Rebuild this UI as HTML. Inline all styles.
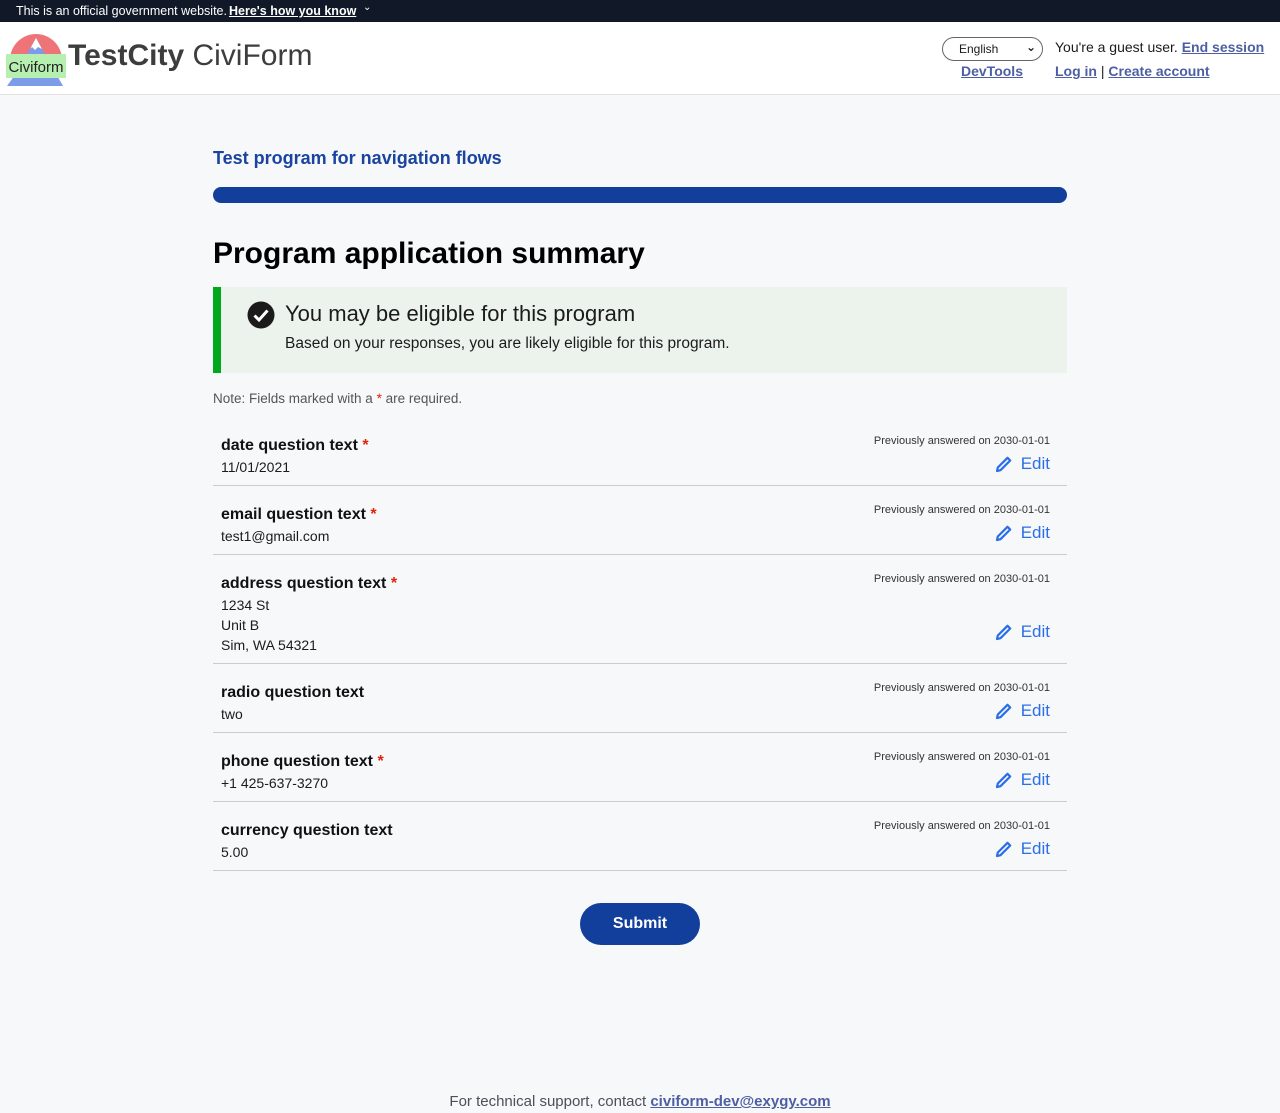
<!DOCTYPE html>
<html><head><meta charset="utf-8"><style>
*{box-sizing:border-box;margin:0;padding:0}
body{width:1280px;height:1113px;background:#f7f8fa;font-family:"Liberation Sans","DejaVu Sans",sans-serif;color:#1b1b1b;position:relative;overflow:hidden}
.a{position:absolute;white-space:nowrap}
.top{left:0;top:0;width:1280px;height:22px;background:#111827;color:#fff;font-size:12.5px}
.hdr{left:0;top:22px;width:1280px;height:73px;background:#fff;border-bottom:1px solid #e3e3e3}
a{color:#4d5fa3;font-weight:bold;text-decoration:underline}
.row{position:absolute;left:213px;width:854px;border-bottom:1px solid #ccc}
.lbl{position:absolute;left:8px;font-weight:bold;font-size:16px;color:#111}
.lbl b{color:#e52207}
.val{position:absolute;left:8px;font-size:14px;line-height:20px}
.prev{position:absolute;right:17px;font-size:11px;color:#333}
.edit{position:absolute;right:17px;font-size:17px;color:#2a6ee8;display:flex;align-items:center;gap:8px}
</style></head><body>
<div class="a top"><span class="a" style="left:16px;top:4px">This is an official government website.</span><span class="a" style="left:229px;top:4px;font-weight:bold;text-decoration:underline">Here's how you know</span><span class="a" style="left:363px;top:2px;font-size:10px">&#8964;</span></div>
<div class="a hdr">
<svg class="a" style="left:5px;top:8px" width="62" height="56" viewBox="0 0 62 56">
<path d="M5 30 A26 26 0 0 1 57 30 L57 40 L5 40Z" fill="#ef7477"/>
<path d="M31 8 L50 42 L58 56 L2 56 L12 42Z" fill="#7c9be8"/>
<path d="M31 8 L37 19 L33 17 L30 20 L27 17 L25 19Z" fill="#fff"/>
<rect x="1" y="24" width="60" height="24" fill="#b6f0b0"/>
<text x="31" y="42" text-anchor="middle" font-size="15" font-family="Liberation Sans" fill="#222">Civiform</text>
</svg>
<span class="a" style="left:68px;top:17px;font-size:30px;color:#3d3d3d"><b>TestCity</b> CiviForm</span>
<div class="a" style="left:942px;top:15px;width:101px;height:24px;border:1px solid #666;border-radius:12px;background:#fff;font-size:12px;padding:4px 0 0 16px">English<span style="position:absolute;right:6px;top:2px;font-weight:bold">&#8964;</span></div>
<span class="a" style="left:961px;top:41px;font-size:14px"><a>DevTools</a></span>
<span class="a" style="left:1055px;top:17px;font-size:14px">You're a guest user. <a>End session</a></span>
<span class="a" style="left:1055px;top:41px;font-size:14px"><a>Log in</a> | <a>Create account</a></span>
</div>
<div class="a" style="left:213px;top:148px;font-size:18px;font-weight:bold;color:#1a44a0">Test program for navigation flows</div>
<div class="a" style="left:213px;top:187px;width:854px;height:16px;background:#133f9c;border-radius:8px"></div>
<div class="a" style="left:213px;top:237px;font-size:30px;font-weight:bold;color:#000">Program application summary</div>
<div class="a" style="left:213px;top:287px;width:854px;height:86px;background:#ecf3ec;border-left:8px solid #00a91c"></div>
<svg class="a" style="left:247px;top:301px" width="28" height="28" viewBox="0 0 28 28"><circle cx="14" cy="14" r="13.5" fill="#1b1b1b"/><path d="M7.5 14.5 L12 19 L20.5 9.5" stroke="#fff" stroke-width="3" fill="none"/></svg>
<div class="a" style="left:285px;top:301px;font-size:22px">You may be eligible for this program</div>
<div class="a" style="left:285px;top:335px;font-size:15.5px">Based on your responses, you are likely eligible for this program.</div>
<div class="a" style="left:213px;top:391px;font-size:13.5px;color:#555">Note: Fields marked with a <span style="color:#e52207">*</span> are required.</div>

<div class="row" style="top:416px;height:70px"><div class="lbl" style="top:21px">date question text <b>*</b></div><div class="val" style="top:41px">11/01/2021</div><div class="prev" style="top:19px">Previously answered on 2030-01-01</div><div class="edit" style="top:38px"><svg width="18" height="18" viewBox="0 0 18 18"><path d="M2 16 L2.8 12.5 L12.5 2.8 L15.2 5.5 L5.5 15.2Z" fill="none" stroke="#2a6ee8" stroke-width="2.2" stroke-linejoin="round"/></svg>Edit</div></div>
<div class="row" style="top:486px;height:69px"><div class="lbl" style="top:20px">email question text <b>*</b></div><div class="val" style="top:40px">test1@gmail.com</div><div class="prev" style="top:18px">Previously answered on 2030-01-01</div><div class="edit" style="top:37px"><svg width="18" height="18" viewBox="0 0 18 18"><path d="M2 16 L2.8 12.5 L12.5 2.8 L15.2 5.5 L5.5 15.2Z" fill="none" stroke="#2a6ee8" stroke-width="2.2" stroke-linejoin="round"/></svg>Edit</div></div>
<div class="row" style="top:555px;height:109px"><div class="lbl" style="top:20px">address question text <b>*</b></div><div class="val" style="top:40px">1234 St<br>Unit B<br>Sim, WA 54321</div><div class="prev" style="top:18px">Previously answered on 2030-01-01</div><div class="edit" style="top:67px"><svg width="18" height="18" viewBox="0 0 18 18"><path d="M2 16 L2.8 12.5 L12.5 2.8 L15.2 5.5 L5.5 15.2Z" fill="none" stroke="#2a6ee8" stroke-width="2.2" stroke-linejoin="round"/></svg>Edit</div></div>
<div class="row" style="top:664px;height:69px"><div class="lbl" style="top:20px">radio question text</div><div class="val" style="top:40px">two</div><div class="prev" style="top:18px">Previously answered on 2030-01-01</div><div class="edit" style="top:37px"><svg width="18" height="18" viewBox="0 0 18 18"><path d="M2 16 L2.8 12.5 L12.5 2.8 L15.2 5.5 L5.5 15.2Z" fill="none" stroke="#2a6ee8" stroke-width="2.2" stroke-linejoin="round"/></svg>Edit</div></div>
<div class="row" style="top:733px;height:69px"><div class="lbl" style="top:20px">phone question text <b>*</b></div><div class="val" style="top:40px">+1 425-637-3270</div><div class="prev" style="top:18px">Previously answered on 2030-01-01</div><div class="edit" style="top:37px"><svg width="18" height="18" viewBox="0 0 18 18"><path d="M2 16 L2.8 12.5 L12.5 2.8 L15.2 5.5 L5.5 15.2Z" fill="none" stroke="#2a6ee8" stroke-width="2.2" stroke-linejoin="round"/></svg>Edit</div></div>
<div class="row" style="top:802px;height:69px"><div class="lbl" style="top:20px">currency question text</div><div class="val" style="top:40px">5.00</div><div class="prev" style="top:18px">Previously answered on 2030-01-01</div><div class="edit" style="top:37px"><svg width="18" height="18" viewBox="0 0 18 18"><path d="M2 16 L2.8 12.5 L12.5 2.8 L15.2 5.5 L5.5 15.2Z" fill="none" stroke="#2a6ee8" stroke-width="2.2" stroke-linejoin="round"/></svg>Edit</div></div>

<div class="a" style="left:580px;top:903px;width:120px;height:42px;border-radius:21px;background:#133f9c;color:#fff;font-weight:bold;font-size:16px;text-align:center;line-height:42px">Submit</div>
<div class="a" style="left:0;width:1280px;top:1093px;text-align:center;font-size:15px;color:#4a4f5a">For technical support, contact <a>civiform-dev@exygy.com</a></div>
</body></html>
